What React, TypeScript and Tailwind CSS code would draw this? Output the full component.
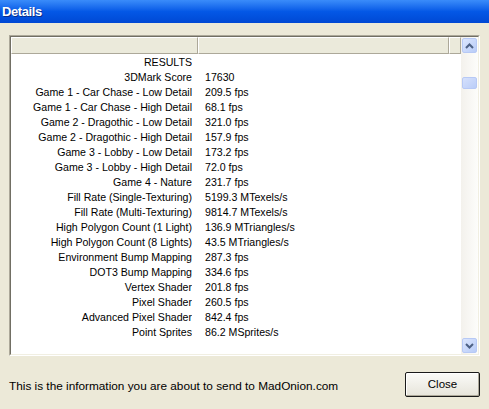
import React from "react";

const rows: [string, string][] = [
  ["RESULTS", ""],
  ["3DMark Score", "17630"],
  ["Game 1 - Car Chase - Low Detail", "209.5 fps"],
  ["Game 1 - Car Chase - High Detail", "68.1 fps"],
  ["Game 2 - Dragothic - Low Detail", "321.0 fps"],
  ["Game 2 - Dragothic - High Detail", "157.9 fps"],
  ["Game 3 - Lobby - Low Detail", "173.2 fps"],
  ["Game 3 - Lobby - High Detail", "72.0 fps"],
  ["Game 4 - Nature", "231.7 fps"],
  ["Fill Rate (Single-Texturing)", "5199.3 MTexels/s"],
  ["Fill Rate (Multi-Texturing)", "9814.7 MTexels/s"],
  ["High Polygon Count (1 Light)", "136.9 MTriangles/s"],
  ["High Polygon Count (8 Lights)", "43.5 MTriangles/s"],
  ["Environment Bump Mapping", "287.3 fps"],
  ["DOT3 Bump Mapping", "334.6 fps"],
  ["Vertex Shader", "201.8 fps"],
  ["Pixel Shader", "260.5 fps"],
  ["Advanced Pixel Shader", "842.4 fps"],
  ["Point Sprites", "86.2 MSprites/s"],
];

function HeaderCell({ className }: { className: string }) {
  return (
    <div
      className={`h-full border-t border-l border-t-white border-l-white border-r border-b border-r-[#ACA899] border-b-[#ACA899] bg-[#EBEADB] ${className}`}
    />
  );
}

function ScrollButton({ up }: { up: boolean }) {
  return (
    <div className="flex h-[15px] w-[15px] items-center justify-center rounded-[2px] border border-[#B7C9F5] bg-gradient-to-br from-[#DCE6FD] to-[#B8CCF8]">
      <svg width="9" height="6" viewBox="0 0 9 6">
        <path
          d={up ? "M1 5 L4.5 1.5 L8 5" : "M1 1 L4.5 4.5 L8 1"}
          fill="none"
          stroke="#4D6185"
          strokeWidth="2"
        />
      </svg>
    </div>
  );
}

export default function App() {
  return (
    <div
      className="flex h-[409px] w-[489px] flex-col bg-[#ECE9D8] text-[11px] text-black"
      style={{ fontFamily: '"Liberation Sans", Arial, sans-serif' }}
    >
      <div className="flex h-[23px] items-center bg-gradient-to-b from-[#3A8CFA] via-[#0458E6] to-[#0048D4] pl-[2px]">
        <span className="text-[13px] font-bold tracking-[-0.4px] text-white [text-shadow:1px_1px_0_#0A2E8A]">
          Details
        </span>
      </div>

      <div className="ml-[9px] mt-[12px] h-[321px] w-[471px] border-t border-l border-t-[#ACA899] border-l-[#ACA899] border-b border-r border-b-white border-r-white">
        <div className="flex h-full w-full border-t border-l border-t-[#716F64] border-l-[#716F64] border-b border-r border-b-[#F1EFE2] border-r-[#F1EFE2] bg-white">
          <div className="flex min-w-0 flex-1 flex-col">
            <div className="flex h-[17px] shrink-0">
              <HeaderCell className="w-[187px]" />
              <HeaderCell className="w-[251px]" />
              <HeaderCell className="flex-1" />
            </div>
            <div className="flex flex-col pt-[1px] text-[10.6px]">
              {rows.map(([label, value]) => (
                <div key={label} className="flex h-[15px] items-center leading-[15px]">
                  <div className="w-[181px] truncate text-right">{label}</div>
                  <div className="pl-[13px]">{value}</div>
                </div>
              ))}
            </div>
          </div>
          <div className="flex w-[17px] flex-col items-center bg-gradient-to-r from-[#F3F1EC] to-[#FDFDFB] py-[1px]">
            <ScrollButton up />
            <div className="mt-[24px] h-[12px] w-[15px] rounded-[2px] border border-[#B7C9F5] bg-gradient-to-br from-[#D6E1FC] to-[#BACDF8]" />
            <div className="flex-1" />
            <ScrollButton up={false} />
          </div>
        </div>
      </div>

      <div className="mt-[16px] flex items-center justify-between pl-[9px] pr-[9px]">
        <span className="pt-[4px] text-[11.8px]">
          This is the information you are about to send to MadOnion.com
        </span>
        <button
          type="button"
          className="h-[25px] w-[75px] rounded-[2px] border border-[#1A1A1A] bg-gradient-to-b from-[#FBFBF8] to-[#E6E4DA] text-[11.5px] shadow-[inset_-1px_-1px_0_#ACA899,inset_1px_1px_0_#FFFFFF]"
        >
          Close
        </button>
      </div>
    </div>
  );
}
